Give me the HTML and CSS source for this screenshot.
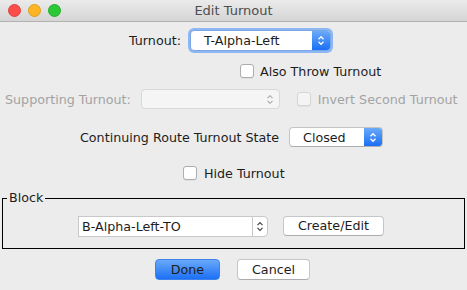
FILE: index.html
```html
<!DOCTYPE html>
<html lang="en">
<head>
	<meta charset="UTF-8">
	<title>Edit Turnout</title>
	<link rel="stylesheet" href="styles.css">
</head>
<body>
	<div class="window">
		<div class="titlebar">
			<div class="lights">
				<span class="light red"></span>
				<span class="light yellow"></span>
				<span class="light green"></span>
			</div>
			<div class="title">Edit Turnout</div>
		</div>

		<div class="row row-turnout">
			<span class="lbl">Turnout:</span>
			<div class="combo combo-focus w-turnout">
				<span class="combo-text">T-Alpha-Left</span>
				<span class="combo-arrow blue">
					<svg width="8" height="11" viewBox="0 0 8 11"><path d="M1.5 4.2 L4 1.7 L6.5 4.2 M1.5 6.8 L4 9.3 L6.5 6.8" fill="none" stroke="#fff" stroke-width="1.3"/></svg>
				</span>
			</div>
		</div>

		<div class="row row-throw">
			<span class="check"></span>
			<span class="lbl">Also Throw Turnout</span>
		</div>

		<div class="row row-support">
			<span class="lbl off">Supporting Turnout:</span>
			<div class="combo combo-off w-support">
				<span class="combo-text"></span>
				<span class="combo-arrow plain">
					<svg width="8" height="11" viewBox="0 0 8 11"><path d="M1.5 4.2 L4 1.7 L6.5 4.2 M1.5 6.8 L4 9.3 L6.5 6.8" fill="none" stroke="#a8a8a8" stroke-width="1.1"/></svg>
				</span>
			</div>
			<span class="check check-off"></span>
			<span class="lbl off">Invert Second Turnout</span>
		</div>

		<div class="row row-state">
			<span class="lbl">Continuing Route Turnout State</span>
			<div class="combo w-state">
				<span class="combo-text">Closed</span>
				<span class="combo-arrow blue">
					<svg width="8" height="11" viewBox="0 0 8 11"><path d="M1.5 4.2 L4 1.7 L6.5 4.2 M1.5 6.8 L4 9.3 L6.5 6.8" fill="none" stroke="#fff" stroke-width="1.3"/></svg>
				</span>
			</div>
		</div>

		<div class="row row-hide">
			<span class="check"></span>
			<span class="lbl">Hide Turnout</span>
		</div>

		<div class="group">
			<span class="group-title">Block</span>
			<div class="row row-block">
				<div class="edit-combo">
					<span class="edit-field">B-Alpha-Left-TO</span>
					<span class="edit-arrow">
						<svg width="8" height="11" viewBox="0 0 8 11"><path d="M1.5 4.2 L4 1.7 L6.5 4.2 M1.5 6.8 L4 9.3 L6.5 6.8" fill="none" stroke="#444" stroke-width="1.2"/></svg>
					</span>
				</div>
				<button class="btn btn-create">Create/Edit</button>
			</div>
		</div>

		<div class="row row-buttons">
			<button class="btn btn-done">Done</button>
			<button class="btn btn-cancel">Cancel</button>
		</div>
	</div>
</body>
</html>
```

FILE: styles.css
```css
*{margin:0;padding:0;box-sizing:border-box;}
body{background-color:#ececec;font-family:"DejaVu Sans","Liberation Sans",sans-serif;font-size:12.7px;color:#1d1d1d;}
.window{width:467px;height:290px;background-color:#ececec;overflow:hidden;}

/*标题栏*/
.titlebar{height:22px;position:relative;background:linear-gradient(#ebebeb,#d5d5d5);border-bottom:1px solid #b2b2b2;display:flex;align-items:center;justify-content:center;}
.lights{position:absolute;left:8px;top:4px;display:flex;gap:7px;}
.light{width:13px;height:13px;border-radius:50%;display:block;}
.red{background-color:#fc4e4b;border:1px solid #e0413d;}
.yellow{background-color:#fdb526;border:1px solid #de9e1f;}
.green{background-color:#2ac935;border:1px solid #22ad2b;}
.title{color:#4d4d4d;font-size:13px;}

/*行*/
.row{display:flex;align-items:center;}
.lbl{white-space:nowrap;}
.off{color:#a3a3a3;}
.row-turnout{margin-top:7px;height:22px;padding-left:129px;gap:9px;}
.row-throw{margin-top:11px;height:18px;padding-left:240px;gap:6px;}
.row-support{margin-top:9px;height:20px;padding-left:5px;}
.row-support .combo{margin-left:10px;margin-right:17px;}
.row-support .check{margin-right:7px;}
.row-state{margin-top:18px;height:20px;padding-left:80px;gap:10px;}
.row-hide{margin-top:17px;height:18px;padding-left:183px;gap:7px;}
.row-buttons{margin-top:10px;height:21px;padding-left:155px;gap:17px;}

/*复选框*/
.check{width:14px;height:14px;border:1px solid #adadad;border-radius:3px;background-color:#fff;display:inline-block;box-shadow:0 1px 0 rgba(0,0,0,0.05);flex-shrink:0;}
.check-off{border-color:#d6d6d6;background-color:#f4f4f4;}

/*下拉框*/
.combo{height:21px;display:flex;border:1px solid #c4c4c4;border-bottom-color:#adadad;border-radius:4px;background-color:#fff;overflow:hidden;flex-shrink:0;}
.combo-text{flex:1;padding-left:13px;line-height:19px;}
.combo-arrow{width:18px;display:flex;align-items:center;justify-content:center;}
.combo-arrow.blue{background:linear-gradient(#6aaaf9,#1b6ff5);}
.combo-focus{box-shadow:0 0 0 2px #8cb7f2;border-color:#7aa6e6;}
.combo-off{background-color:#f5f5f5;border-color:#d8d8d8;}
.w-turnout{width:141px;}
.w-support{width:139px;height:20px;}
.w-state{width:94px;height:20px;}

/*分组框*/
.group{margin:16px 2px 0;height:51px;border:1px solid #000;position:relative;}
.group-title{position:absolute;top:-9px;left:4px;padding:0 2px;background-color:#ececec;line-height:16px;}
.row-block{padding-left:75px;padding-top:17px;gap:15px;}
.edit-combo{display:flex;height:21px;}
.edit-field{width:174px;background-color:#fff;border:1px solid #c8c8c8;border-right:none;padding-left:3px;line-height:19px;}
.edit-arrow{width:16px;border:1px solid #c8c8c8;border-radius:0 4px 4px 0;background-color:#fff;display:flex;align-items:center;justify-content:center;}

/*按钮*/
.btn{font-family:inherit;font-size:12.7px;color:#1d1d1d;height:20px;background-color:#fff;border:1px solid #c6c6c6;border-bottom-color:#acacac;border-radius:4px;}
.btn-create{width:101px;margin-top:-2px;}
.btn-done{width:65px;height:21px;background:linear-gradient(#69a9fa,#1c70f5);border-color:#3b82ed;}
.btn-cancel{width:73px;height:21px;}
```
